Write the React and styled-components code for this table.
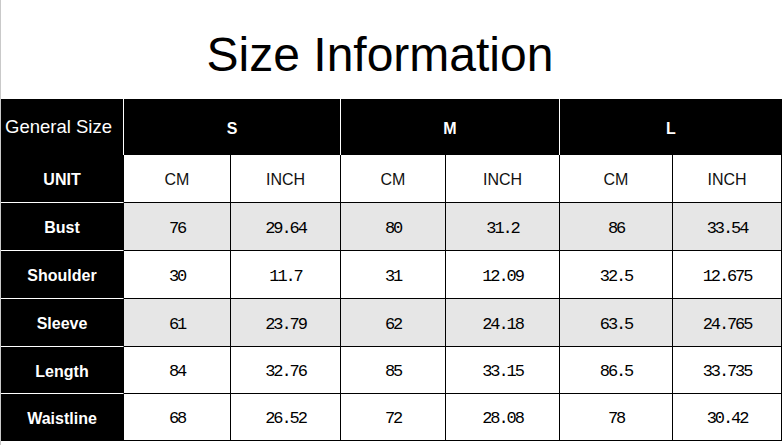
import React from "react";
import styled, { createGlobalStyle } from "styled-components";

const GlobalStyle = createGlobalStyle`
  html, body {
    margin: 0;
    padding: 0;
    background: #ffffff;
  }
  body {
    font-family: "Liberation Sans", Arial, sans-serif;
  }
`;

const Page = styled.div`
  width: 783px;
  height: 445px;
  box-sizing: border-box;
  border-left: 1px solid #c9c9c9;
  background: #fff;
  overflow: hidden;
`;

const Title = styled.h1`
  margin: 0;
  height: 99px;
  box-sizing: border-box;
  padding: 31px 24px 0 0;
  text-align: center;
  font-family: "Liberation Sans", Arial, sans-serif;
  font-weight: normal;
  font-size: 48px;
  line-height: 48px;
  color: #000;
`;

const Grid = styled.div`
  display: grid;
  width: 781px;
  grid-template-columns: 123px 107px 110px 105px 114px 113px 109px;
  grid-template-rows: 56px 48px 48px 48px 48px 47px 47px;
`;

const Cell = styled.div`
  box-sizing: border-box;
  display: flex;
  align-items: center;
  justify-content: center;
  min-width: 0;
  padding-top: 3px;
`;

const SizeHead = styled(Cell)`
  grid-column: span ${(p) => p.span || 1};
  background: #000;
  color: #fff;
  border-right: ${(p) => (p.last ? "none" : "1px solid #fff")};
  font-size: ${(p) => (p.label ? "18.5px" : "16px")};
  font-weight: ${(p) => (p.label ? "normal" : "bold")};
  justify-content: ${(p) => (p.label ? "flex-start" : "center")};
  padding-left: ${(p) => (p.label ? "4px" : "0")};
  padding-top: ${(p) => (p.label ? "0" : "3px")};
`;

const RowHead = styled(Cell)`
  background: #000;
  color: #fff;
  font-size: 16px;
  font-weight: bold;
  border-bottom: ${(p) => (p.last ? "none" : "1px solid #fff")};
  border-right: 1px solid #000;
`;

const UnitCell = styled(Cell)`
  background: #fff;
  color: #111;
  font-size: 16px;
  border-right: 1px solid #000;
  border-bottom: 1px solid #000;
`;

const DataCell = styled(Cell)`
  background: ${(p) => (p.shade ? "#e6e6e6" : "#fff")};
  color: #000;
  font-family: "Liberation Mono", "DejaVu Sans Mono", monospace;
  font-size: 17px;
  letter-spacing: -2.1px;
  border-right: 1px solid #000;
  border-bottom: 1px solid #000;
`;

const rows = [
  { name: "Bust", values: ["76", "29.64", "80", "31.2", "86", "33.54"], shade: true },
  { name: "Shoulder", values: ["30", "11.7", "31", "12.09", "32.5", "12.675"] },
  { name: "Sleeve", values: ["61", "23.79", "62", "24.18", "63.5", "24.765"], shade: true },
  { name: "Length", values: ["84", "32.76", "85", "33.15", "86.5", "33.735"] },
  { name: "Waistline", values: ["68", "26.52", "72", "28.08", "78", "30.42"] },
];

const units = ["CM", "INCH", "CM", "INCH", "CM", "INCH"];

export default function App() {
  return (
    <>
      <GlobalStyle />
      <Page>
        <Title>Size Information</Title>
        <Grid>
          <SizeHead label>General Size</SizeHead>
          <SizeHead span={2}>S</SizeHead>
          <SizeHead span={2}>M</SizeHead>
          <SizeHead span={2} last>L</SizeHead>

          <RowHead>UNIT</RowHead>
          {units.map((u, i) => (
            <UnitCell key={"u" + i}>{u}</UnitCell>
          ))}

          {rows.map((row, r) => (
            <React.Fragment key={row.name}>
              <RowHead last={r === rows.length - 1}>{row.name}</RowHead>
              {row.values.map((v, i) => (
                <DataCell key={i} shade={row.shade}>
                  {v}
                </DataCell>
              ))}
            </React.Fragment>
          ))}
        </Grid>
      </Page>
    </>
  );
}
